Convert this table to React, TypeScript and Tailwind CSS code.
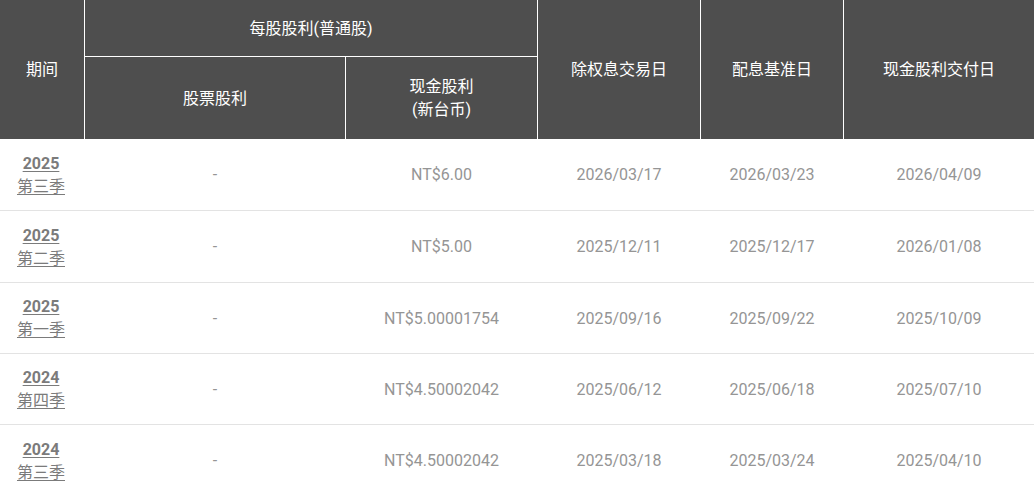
import React from "react";

const cols = "grid grid-cols-[84px_260px_191px_162px_142px_190px] gap-x-px";

const rows = [
  { y: "2025", q: "第三季", cash: "NT$6.00", ex: "2026/03/17", rec: "2026/03/23", pay: "2026/04/09", h: "h-[72px]" },
  { y: "2025", q: "第二季", cash: "NT$5.00", ex: "2025/12/11", rec: "2025/12/17", pay: "2026/01/08", h: "h-[72px]" },
  { y: "2025", q: "第一季", cash: "NT$5.00001754", ex: "2025/09/16", rec: "2025/09/22", pay: "2025/10/09", h: "h-[71px]" },
  { y: "2024", q: "第四季", cash: "NT$4.50002042", ex: "2025/06/12", rec: "2025/06/18", pay: "2025/07/10", h: "h-[71px]" },
  { y: "2024", q: "第三季", cash: "NT$4.50002042", ex: "2025/03/18", rec: "2025/03/24", pay: "2025/04/10", h: "h-[72px]" },
];

export default function App() {
  const font = { fontFamily: 'Roboto, "Noto Sans CJK SC", sans-serif' };
  return (
    <div className="w-[1034px] h-[496px] overflow-hidden bg-white text-[16px]" style={font}>
      <div className="grid grid-cols-[84px_260px_191px_162px_142px_190px] grid-rows-[56px_82px] gap-px bg-white text-white leading-[23px]">
        <div className="row-span-2 bg-[#4e4e4e] flex items-center justify-center">期间</div>
        <div className="col-span-2 bg-[#4e4e4e] flex items-center justify-center">每股股利(普通股)</div>
        <div className="row-span-2 bg-[#4e4e4e] flex items-center justify-center">除权息交易日</div>
        <div className="row-span-2 bg-[#4e4e4e] flex items-center justify-center">配息基准日</div>
        <div className="row-span-2 bg-[#4e4e4e] flex items-center justify-center">现金股利交付日</div>
        <div className="bg-[#4e4e4e] flex items-center justify-center">股票股利</div>
        <div className="bg-[#4e4e4e] flex flex-col items-center justify-center text-center">
          <span>现金股利</span>
          <span>(新台币)</span>
        </div>
      </div>
      <div>
        {rows.map((r, i) => (
          <div key={i} className={`${cols} ${r.h} border-b border-[#e3e3e3] text-[#959595] leading-[23px]`}>
            <div className="flex flex-col items-center justify-center pr-[2px] text-[#7b7b7b] underline underline-offset-2">
              <span className="font-bold">{r.y}</span>
              <span>{r.q}</span>
            </div>
            <div className="flex items-center justify-center">-</div>
            <div className="flex items-center justify-center">{r.cash}</div>
            <div className="flex items-center justify-center">{r.ex}</div>
            <div className="flex items-center justify-center">{r.rec}</div>
            <div className="flex items-center justify-center">{r.pay}</div>
          </div>
        ))}
      </div>
    </div>
  );
}
